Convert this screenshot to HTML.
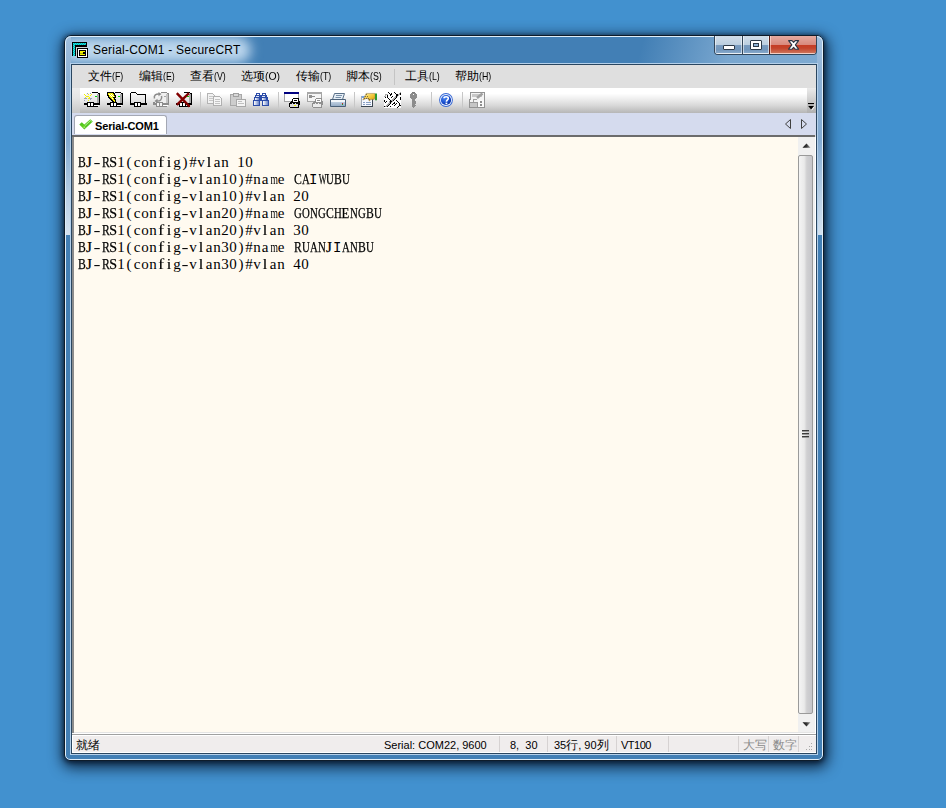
<!DOCTYPE html>
<html><head><meta charset="utf-8">
<style>
*{box-sizing:border-box}
html,body{margin:0;padding:0}
body{width:946px;height:808px;overflow:hidden;position:relative;background:#4291cf;font-family:"Liberation Sans",sans-serif}
.a{position:absolute}
svg{position:absolute;overflow:visible}
#shadow{left:64px;top:35px;width:760px;height:726px;border-radius:7px;box-shadow:1px 4px 14px 3px rgba(0,12,30,.75),0 1px 4px 1px rgba(0,10,25,.55)}
#frame{left:64px;top:35px;width:760px;height:726px;border-radius:7px 7px 6px 6px;background:#427fb5;border:1px solid #0e1c2a;overflow:hidden}
#frame .hl{position:absolute;left:0;top:0;right:0;bottom:0;border:1px solid rgba(232,243,252,.95);border-radius:6px 6px 5px 5px}
#glow{left:-6px;top:1px;width:192px;height:26px;background:rgba(200,222,242,.92);border-radius:14px;filter:blur(6px)}
#streakR{left:496px;top:0px;width:270px;height:28px;background:linear-gradient(105deg,rgba(175,205,232,0) 30%,rgba(175,205,232,.5) 62%,rgba(175,205,232,.55) 100%)}
.sideTop{top:0px;width:5px;height:104px;background:linear-gradient(#a2c0de,#8cb0d4 40%,#82aad2)}
.side{top:104px;width:5px;height:95px;background:linear-gradient(#82aad2,#b8cfe5 60%,#d4e2ef)}
#clientHl{left:70px;top:63px;width:748px;height:692px;border:1px solid #b4d0ea}
#client{left:71px;top:64px;width:746px;height:690px;border:1px solid #2a4660;background:#e0e0e0}
.title{left:93px;top:43px;font-size:12px;color:#000;white-space:pre;letter-spacing:.22px}
.menu{top:69px;font-size:12px;white-space:pre;color:#000;line-height:14px}
.menu span{font-size:11px;display:inline-block;transform-origin:0 50%}
#menubar{left:72px;top:65px;width:744px;height:23px;background:#dfdfdf}
#toolbar{left:72px;top:88px;width:744px;height:25px;background:linear-gradient(#fff 0,#fff 22%,#f0f0f0 42%,#d8d8d8 70%,#b6b6b6 100%)}
#tbgrip{left:72px;top:88px;width:8px;height:25px;background:linear-gradient(#ececec,#e4e4e4 40%,#c8c8c8)}
#chev{left:807px;top:88px;width:9px;height:25px;background:linear-gradient(#eaeaea,#b0b0b0)}
.tsep{top:92px;width:1px;height:18px;background:linear-gradient(#c6c6c6 0,#c8c8c8 80%,rgba(200,200,200,0))}
#tabbar{left:72px;top:113px;width:744px;height:22px;background:#d5dbee}
#tab{left:74px;top:115px;width:93px;height:19px;background:#fff;border:1px solid #a4a8b4;border-bottom:none;border-radius:3px 3px 0 0}
.tabt{left:95px;top:120px;font-size:11px;font-weight:bold;white-space:pre;color:#000;letter-spacing:-.15px}
#tabline{left:72px;top:135px;width:743px;height:2px;background:#6c6c6c}
#term{left:72px;top:137px;width:726px;height:596px;background:#fffaf0;border-left:2px solid #8c8c8c}
#scroll{left:798px;top:137px;width:18px;height:596px;background:#f0f0f0;border-right:1px solid #fff}
#thumb{left:798px;top:155px;width:15px;height:559px;border:1px solid #9a9a9a;border-radius:2px;background:linear-gradient(90deg,#f4f4f4 0,#eaeaea 40%,#d0d0d2 60%,#c6c6ca 100%)}
#tt{left:77px;top:154px;font-family:"Liberation Serif",serif;font-size:15px;line-height:17px;color:#000}
#tt i.u{-webkit-text-stroke:.25px #000}
#tt i.m{font-family:"Liberation Mono",monospace;font-size:14px;margin-top:1px}
#tt i{position:absolute;display:block;width:8px;height:17px;text-align:center;font-style:normal;white-space:pre}
#status{left:72px;top:733px;width:744px;height:20px;background:#f0eded;border-top:1px solid #fff;border-left:1px solid #fff;border-bottom:1px solid #fff}
#statusline{left:72px;top:734px;width:744px;height:1px;background:#a0a0a0}
.st{top:739px;font-size:11px;white-space:pre;color:#000;line-height:13px}
.sep{top:736px;width:1px;height:16px;background:#d6d2d2}
.cb{top:36px;height:19px;border:1px solid #2c3f52;}
</style></head><body>
<div class="a" id="shadow"></div>
<div class="a" id="frame">
<div class="a" id="glow"></div>
<div class="a" id="streakR"></div>
<div class="a sideTop" style="left:1px"></div>
<div class="a sideTop" style="left:752px"></div>
<div class="a side" style="left:1px"></div>
<div class="a side" style="left:752px"></div>
<div class="hl"></div></div>
<div class="a" id="clientHl"></div>
<div class="a" id="client"></div>
<!-- title icon -->
<svg style="left:72px;top:42px" width="16" height="16" viewBox="0 0 16 16" shape-rendering="crispEdges">
<rect x="0" y="0" width="15" height="14" fill="#000"/>
<rect x="1" y="1" width="13" height="2" fill="#20a0a0"/><rect x="1" y="1" width="2" height="13" fill="#20a0a0"/>
<g fill="#00f0f0"><rect x="1" y="1" width="1" height="1"/><rect x="3" y="1" width="1" height="1"/><rect x="5" y="1" width="1" height="1"/><rect x="7" y="1" width="1" height="1"/><rect x="9" y="1" width="1" height="1"/><rect x="11" y="1" width="1" height="1"/><rect x="13" y="1" width="1" height="1"/><rect x="2" y="2" width="1" height="1"/><rect x="4" y="2" width="1" height="1"/><rect x="6" y="2" width="1" height="1"/><rect x="8" y="2" width="1" height="1"/><rect x="10" y="2" width="1" height="1"/><rect x="12" y="2" width="1" height="1"/><rect x="1" y="3" width="1" height="1"/><rect x="2" y="4" width="1" height="1"/><rect x="1" y="5" width="1" height="1"/><rect x="2" y="6" width="1" height="1"/><rect x="1" y="7" width="1" height="1"/><rect x="2" y="8" width="1" height="1"/><rect x="1" y="9" width="1" height="1"/><rect x="2" y="10" width="1" height="1"/><rect x="1" y="11" width="1" height="1"/><rect x="2" y="12" width="1" height="1"/><rect x="1" y="13" width="1" height="1"/></g>
<rect x="4" y="5" width="11" height="1" fill="#d0d0d0"/><rect x="4" y="5" width="1" height="9" fill="#d0d0d0"/>
<rect x="5" y="6" width="11" height="10" fill="#000"/>
<rect x="6" y="7" width="9" height="8" fill="#fff"/>
<rect x="7" y="8" width="7" height="6" fill="#000"/>
<rect x="8" y="9" width="5" height="4" fill="#f0f000"/>
<rect x="11" y="10" width="2" height="2" fill="#000"/>
<rect x="8" y="11" width="3" height="1" fill="#b0b000"/>
</svg>
<div class="a title">Serial-COM1 - SecureCRT</div>
<!-- caption buttons -->
<div class="a" style="left:714px;top:36px;width:103px;height:19px;border:1px solid #32465a;border-top:none;border-radius:0 0 4px 4px;overflow:hidden">
 <div class="a" style="left:0;top:0;width:27px;height:18px;background:linear-gradient(#d0dde9 0,#bccfe0 50%,#7a9cbf 52%,#7196bc 80%,#86a8ca 100%);border:1px solid rgba(255,255,255,.55);border-top:none"></div>
 <div class="a" style="left:27px;top:0;width:1px;height:18px;background:#32465a"></div>
 <div class="a" style="left:28px;top:0;width:26px;height:18px;background:linear-gradient(#d0dde9 0,#bccfe0 50%,#7a9cbf 52%,#7196bc 80%,#86a8ca 100%);border:1px solid rgba(255,255,255,.55);border-top:none"></div>
 <div class="a" style="left:54px;top:0;width:1px;height:18px;background:#5a2018"></div>
 <div class="a" style="left:55px;top:0;width:47px;height:18px;background:linear-gradient(#e4aaa0 0,#d98a7e 50%,#c53b23 52%,#c4442c 72%,#cc7258 100%);border:1px solid rgba(255,230,220,.6);border-top:none"></div>
</div>
<div class="a" style="left:723px;top:45px;width:12px;height:5px;background:#fff;border:1px solid #2d3a48;border-radius:1px"></div>
<div class="a" style="left:750px;top:40px;width:12px;height:10px;background:#fff;border:1px solid #2d3a48;border-radius:1px"></div>
<div class="a" style="left:753px;top:43px;width:6px;height:4px;background:#8fb2d4;border:1px solid #2d3a48"></div>
<svg style="left:788px;top:40px" width="12" height="10" viewBox="0 0 12 10">
<path d="M0.6 0.6 H4 L5.6 2.4 L7.2 0.6 H10.6 L7.4 4.9 L10.6 9.2 H7.2 L5.6 7.3 L4 9.2 H0.6 L3.8 4.9 Z" fill="#fff" stroke="#2a3645" stroke-width="1.1" stroke-linejoin="round"/>
</svg>
<!-- menu -->
<div class="a" id="menubar"></div>
<div class="a menu" style="left:88px">文件<span style="transform:scaleX(.8)">(F)</span></div>
<div class="a menu" style="left:139px">编辑<span style="transform:scaleX(.8)">(E)</span></div>
<div class="a menu" style="left:190px">查看<span style="transform:scaleX(.8)">(V)</span></div>
<div class="a menu" style="left:241px">选项<span style="transform:scaleX(.95)">(O)</span></div>
<div class="a menu" style="left:296px">传输<span style="transform:scaleX(.8)">(T)</span></div>
<div class="a menu" style="left:346px">脚本<span style="transform:scaleX(.8)">(S)</span></div>
<div class="a" style="left:394px;top:69px;width:1px;height:16px;background:#c4c4c4"></div>
<div class="a menu" style="left:405px">工具<span style="transform:scaleX(.8)">(L)</span></div>
<div class="a menu" style="left:455px">帮助<span style="transform:scaleX(.8)">(H)</span></div>
<!-- toolbar -->
<div class="a" id="toolbar"></div>
<div class="a" id="tbgrip"></div>
<div class="a" id="chev"></div>
<svg style="left:808px;top:102px" width="7" height="9" viewBox="0 0 7 9">
<rect x="0" y="1" width="6" height="1.5" fill="#000"/>
<rect x="0" y="2.5" width="6.5" height="1.2" fill="#fff"/>
<path d="M0 3.8 H6.2 L3.1 7.6 Z" fill="#000"/>
<path d="M6.4 4.6 L3.6 8.2" stroke="#fff" stroke-width="1"/>
</svg>
<!--ICONS-->
<!-- icon1 connect -->
<svg style="left:84px;top:92px" width="16" height="16" viewBox="0 0 16 16" shape-rendering="crispEdges">
<defs><linearGradient id="bx" x1="0" y1="0" x2="0" y2="1"><stop offset="0" stop-color="#fafafa"/><stop offset="1" stop-color="#dedede"/></linearGradient></defs>
<rect x="2" y="1" width="13" height="10" fill="url(#bx)"/>
<rect x="13" y="2" width="2" height="9" fill="#a9a9a9"/>
<rect x="8" y="0" width="6" height="1" fill="#000"/><rect x="14" y="1" width="1" height="1" fill="#000"/>
<rect x="15" y="1" width="1" height="11" fill="#000"/>
<rect x="11" y="4" width="2" height="1" fill="#00d800"/>
<g fill="#f4f000"><rect x="0" y="2" width="1" height="1"/><rect x="1" y="3" width="1" height="1"/><rect x="2" y="4" width="2" height="1"/><rect x="4" y="6" width="2" height="1"/><rect x="4" y="2" width="1" height="1"/><rect x="4" y="4" width="1" height="1"/><rect x="7" y="2" width="1" height="1"/><rect x="6" y="3" width="1" height="1"/><rect x="5" y="5" width="1" height="1"/><rect x="1" y="5" width="1" height="1"/><rect x="4" y="8" width="1" height="1"/></g>
<g fill="#9aa0b8"><rect x="3" y="1" width="1" height="1"/><rect x="6" y="1" width="1" height="1"/><rect x="0" y="6" width="3" height="1"/><rect x="6" y="6" width="2" height="1"/><rect x="0" y="8" width="1" height="1"/><rect x="6" y="7" width="1" height="1"/></g>
<rect x="0" y="11" width="16" height="2" fill="#000"/>
<rect x="10" y="13" width="5" height="1" fill="#fff"/>
<rect x="10" y="14" width="4" height="1" fill="#000"/>
<rect x="3" y="10" width="7" height="5" fill="#000"/>
<rect x="4" y="11" width="2" height="3" fill="#fff"/><rect x="7" y="11" width="2" height="3" fill="#fff"/>
</svg>
<!-- icon2 lightning -->
<svg style="left:107px;top:92px" width="16" height="16" viewBox="0 0 16 16" shape-rendering="crispEdges">
<rect x="2" y="1" width="13" height="10" fill="url(#bx)"/>
<rect x="13" y="2" width="2" height="9" fill="#a9a9a9"/>
<rect x="8" y="0" width="6" height="1" fill="#000"/><rect x="14" y="1" width="1" height="1" fill="#000"/>
<rect x="15" y="1" width="1" height="11" fill="#000"/>
<rect x="11" y="4" width="2" height="1" fill="#00d800"/>
<g fill="#000"><rect x="0" y="0" width="1" height="1"/><rect x="0" y="1" width="1" height="1"/><rect x="0" y="2" width="1" height="1"/><rect x="0" y="3" width="1" height="1"/><rect x="1" y="0" width="1" height="1"/><rect x="1" y="3" width="1" height="1"/><rect x="1" y="4" width="1" height="1"/><rect x="1" y="5" width="1" height="1"/><rect x="2" y="0" width="1" height="1"/><rect x="2" y="5" width="1" height="1"/><rect x="2" y="6" width="1" height="1"/><rect x="3" y="0" width="1" height="1"/><rect x="3" y="6" width="1" height="1"/><rect x="3" y="7" width="1" height="1"/><rect x="4" y="0" width="1" height="1"/><rect x="4" y="7" width="1" height="1"/><rect x="4" y="8" width="1" height="1"/><rect x="5" y="0" width="1" height="1"/><rect x="5" y="8" width="1" height="1"/><rect x="5" y="9" width="1" height="1"/><rect x="6" y="0" width="1" height="1"/><rect x="6" y="1" width="1" height="1"/><rect x="6" y="5" width="1" height="1"/><rect x="6" y="9" width="1" height="1"/><rect x="6" y="10" width="1" height="1"/><rect x="7" y="1" width="1" height="1"/><rect x="7" y="2" width="1" height="1"/><rect x="7" y="3" width="1" height="1"/><rect x="7" y="5" width="1" height="1"/><rect x="7" y="6" width="1" height="1"/><rect x="7" y="7" width="1" height="1"/><rect x="7" y="10" width="1" height="1"/><rect x="8" y="3" width="1" height="1"/><rect x="8" y="4" width="1" height="1"/><rect x="8" y="5" width="1" height="1"/><rect x="8" y="7" width="1" height="1"/><rect x="8" y="8" width="1" height="1"/><rect x="8" y="9" width="1" height="1"/><rect x="8" y="10" width="1" height="1"/></g><g fill="#f4ec00"><rect x="1" y="1" width="1" height="1"/><rect x="1" y="2" width="1" height="1"/><rect x="2" y="1" width="1" height="1"/><rect x="2" y="3" width="1" height="1"/><rect x="2" y="4" width="1" height="1"/><rect x="3" y="1" width="1" height="1"/><rect x="3" y="2" width="1" height="1"/><rect x="3" y="4" width="1" height="1"/><rect x="3" y="5" width="1" height="1"/><rect x="4" y="1" width="1" height="1"/><rect x="4" y="3" width="1" height="1"/><rect x="4" y="5" width="1" height="1"/><rect x="4" y="6" width="1" height="1"/><rect x="5" y="1" width="1" height="1"/><rect x="5" y="2" width="1" height="1"/><rect x="5" y="4" width="1" height="1"/><rect x="5" y="5" width="1" height="1"/><rect x="5" y="7" width="1" height="1"/><rect x="6" y="2" width="1" height="1"/><rect x="6" y="3" width="1" height="1"/><rect x="6" y="6" width="1" height="1"/><rect x="6" y="7" width="1" height="1"/><rect x="6" y="8" width="1" height="1"/><rect x="7" y="4" width="1" height="1"/><rect x="7" y="8" width="1" height="1"/><rect x="7" y="9" width="1" height="1"/></g><g fill="#fff"><rect x="2" y="2" width="1" height="1"/><rect x="3" y="3" width="1" height="1"/><rect x="4" y="2" width="1" height="1"/><rect x="4" y="4" width="1" height="1"/><rect x="5" y="3" width="1" height="1"/><rect x="5" y="6" width="1" height="1"/><rect x="6" y="4" width="1" height="1"/></g>
<rect x="0" y="11" width="16" height="2" fill="#000"/>
<rect x="10" y="13" width="5" height="1" fill="#fff"/>
<rect x="10" y="14" width="4" height="1" fill="#000"/>
<rect x="3" y="10" width="7" height="5" fill="#000"/>
<rect x="4" y="11" width="2" height="3" fill="#fff"/><rect x="7" y="11" width="2" height="3" fill="#fff"/>
</svg>
<!-- icon3 folder -->
<svg style="left:130px;top:92px" width="17" height="16" viewBox="0 0 17 16" shape-rendering="crispEdges">
<path d="M0 1 H1 V0 H6 V1 H7 V2 H16 V12 H0 Z" fill="#000"/>
<path d="M1 1 H6 V2 H7 V3 H15 V11 H1 Z" fill="url(#bx)"/>
<rect x="1" y="11" width="15" height="1" fill="#000"/>
<rect x="0" y="11" width="17" height="2" fill="#000"/>
<rect x="4" y="10" width="7" height="5" fill="#000"/>
<rect x="5" y="11" width="2" height="3" fill="#fff"/><rect x="8" y="11" width="2" height="3" fill="#fff"/>
</svg>
<!-- icon4 reconnect (disabled) -->
<svg style="left:153px;top:92px" width="16" height="16" viewBox="0 0 16 16" shape-rendering="crispEdges">
<rect x="5" y="1" width="10" height="10" fill="#efefef"/>
<rect x="13" y="2" width="2" height="9" fill="#c4c4c4"/>
<rect x="8" y="0" width="6" height="1" fill="#8a8a8a"/><rect x="14" y="1" width="1" height="1" fill="#8a8a8a"/>
<rect x="15" y="1" width="1" height="11" fill="#8a8a8a"/>
<rect x="11" y="4" width="2" height="1" fill="#a8a8a8"/>
<path d="M1.5 6.5 C0.5 3.5 3 1.5 6.5 2" fill="none" stroke="#8c8c8c" stroke-width="1.5" shape-rendering="auto"/>
<path d="M5.5 0 L8.5 2 L5.5 4.2 Z" fill="#8c8c8c" shape-rendering="auto"/>
<path d="M8.5 4 C9.5 7.5 7 9.5 3.5 9" fill="none" stroke="#8c8c8c" stroke-width="1.5" shape-rendering="auto"/>
<path d="M4.5 6.8 L1.5 9 L4.5 11.2 Z" fill="#8c8c8c" shape-rendering="auto"/>
<rect x="0" y="11" width="16" height="2" fill="#8c8c8c"/>
<rect x="0" y="10" width="2" height="1" fill="#8c8c8c"/>
<rect x="10" y="13" width="5" height="1" fill="#fff"/>
<rect x="10" y="14" width="4" height="1" fill="#8c8c8c"/>
<rect x="3" y="10" width="7" height="5" fill="#8c8c8c"/>
<rect x="4" y="11" width="2" height="3" fill="#f4f4f4"/><rect x="7" y="11" width="2" height="3" fill="#f4f4f4"/>
</svg>
<!-- icon5 disconnect -->
<svg style="left:176px;top:92px" width="16" height="16" viewBox="0 0 16 16" shape-rendering="crispEdges">
<rect x="2" y="1" width="13" height="10" fill="url(#bx)"/>
<rect x="13" y="2" width="2" height="9" fill="#a9a9a9"/>
<rect x="8" y="0" width="6" height="1" fill="#000"/><rect x="14" y="1" width="1" height="1" fill="#000"/>
<rect x="15" y="1" width="1" height="11" fill="#000"/>
<rect x="11" y="4" width="2" height="1" fill="#00d800"/>
<rect x="0" y="11" width="16" height="2" fill="#000"/>
<rect x="10" y="13" width="5" height="1" fill="#fff"/>
<rect x="10" y="14" width="4" height="1" fill="#000"/>
<rect x="3" y="10" width="7" height="5" fill="#000"/>
<rect x="4" y="11" width="2" height="3" fill="#fff"/><rect x="7" y="11" width="2" height="3" fill="#fff"/>
<path d="M0.8 1.2 L13.6 14.6 M13 1.2 L0.8 12.8" stroke="#820000" stroke-width="2.4" shape-rendering="auto"/>
</svg>
<!-- copy (disabled) -->
<svg style="left:207px;top:93px" width="16" height="14" viewBox="0 0 16 14" shape-rendering="crispEdges">
<path d="M0 0 H5 L7 2 V10 H0 Z" fill="#f2f2f2" stroke="#b4b4b4" stroke-width="1" transform="translate(.5 .5)"/>
<g fill="#c8c8c8"><rect x="2" y="3" width="4" height="1"/><rect x="2" y="5" width="4" height="1"/><rect x="2" y="7" width="4" height="1"/></g>
<path d="M0 0 H6 L8 2 V9 H0 Z" fill="#f6f6f6" stroke="#b0b0b0" stroke-width="1" transform="translate(6.5 3.5)"/>
<g fill="#c4c4c4"><rect x="8" y="6" width="5" height="1"/><rect x="8" y="8" width="5" height="1"/><rect x="8" y="10" width="5" height="1"/></g>
</svg>
<!-- paste (disabled) -->
<svg style="left:230px;top:93px" width="17" height="14" viewBox="0 0 17 14" shape-rendering="crispEdges">
<rect x="0.5" y="1.5" width="11" height="11" fill="#cdcdcd" stroke="#a8a8a8"/>
<rect x="3.5" y="0.5" width="5" height="3" fill="#d8d8d8" stroke="#a0a0a0"/>
<rect x="6.5" y="6.5" width="9" height="7" fill="#f4f4f4" stroke="#a8a8a8"/>
<g fill="#c0c0c0"><rect x="8" y="8" width="4" height="1"/><rect x="8" y="10" width="6" height="1"/></g>
</svg>
<!-- find binoculars -->
<svg style="left:253px;top:93px" width="16" height="14" viewBox="0 0 16 14" shape-rendering="crispEdges">
<defs><linearGradient id="bn" x1="0" y1="0" x2="1" y2="0"><stop offset="0" stop-color="#fff"/><stop offset="1" stop-color="#6a84c8"/></linearGradient></defs>
<g fill="#2c4ca8">
<rect x="3" y="0" width="4" height="3"/><rect x="2" y="2" width="6" height="3"/><rect x="1" y="4" width="7" height="4"/><rect x="0" y="7" width="7" height="6"/>
<rect x="9" y="0" width="4" height="3"/><rect x="8" y="2" width="6" height="3"/><rect x="8" y="4" width="7" height="4"/><rect x="9" y="7" width="7" height="6"/>
<rect x="6" y="5" width="4" height="3"/>
</g>
<rect x="4" y="1" width="2" height="1" fill="#fff"/><rect x="10" y="1" width="2" height="1" fill="#fff"/>
<rect x="3" y="3" width="3" height="1" fill="#dce4f6"/><rect x="9" y="3" width="3" height="1" fill="#dce4f6"/>
<rect x="2" y="5" width="4" height="2" fill="url(#bn)"/><rect x="9" y="5" width="4" height="2" fill="url(#bn)"/>
<rect x="1" y="8" width="5" height="4" fill="url(#bn)"/><rect x="10" y="8" width="5" height="4" fill="url(#bn)"/>
</svg>
<!-- print screen -->
<svg style="left:284px;top:92px" width="17" height="17" viewBox="0 0 17 17" shape-rendering="crispEdges">
<rect x="0.5" y="0.5" width="14" height="9" fill="#fff" stroke="#a4a4a4"/>
<rect x="0" y="0" width="15" height="2" fill="#000080"/>
<rect x="9" y="6" width="6" height="1" fill="#000"/><rect x="8" y="7" width="1" height="1" fill="#000"/><rect x="9" y="7" width="5" height="1" fill="#fff"/><rect x="14" y="7" width="1" height="1" fill="#000"/><rect x="8" y="8" width="1" height="1" fill="#000"/><rect x="9" y="8" width="1" height="1" fill="#fff"/><rect x="10" y="8" width="3" height="1" fill="#000"/><rect x="13" y="8" width="1" height="1" fill="#fff"/><rect x="14" y="8" width="1" height="1" fill="#000"/><rect x="7" y="9" width="2" height="1" fill="#000"/><rect x="9" y="9" width="5" height="1" fill="#fff"/><rect x="14" y="9" width="2" height="1" fill="#000"/><rect x="6" y="10" width="10" height="1" fill="#000"/><rect x="5" y="11" width="11" height="1" fill="#000"/><rect x="8" y="11" width="1" height="1" fill="#dcdcdc"/><rect x="11" y="11" width="1" height="1" fill="#dcdcdc"/><rect x="5" y="12" width="1" height="1" fill="#000"/><rect x="6" y="12" width="8" height="1" fill="#dcdcdc"/><rect x="14" y="12" width="2" height="1" fill="#000"/><rect x="5" y="13" width="1" height="1" fill="#000"/><rect x="6" y="13" width="4" height="1" fill="#dcdcdc"/><rect x="10" y="13" width="2" height="1" fill="#f0f000"/><rect x="12" y="13" width="2" height="1" fill="#dcdcdc"/><rect x="14" y="13" width="1" height="1" fill="#000"/><rect x="5" y="14" width="1" height="1" fill="#000"/><rect x="6" y="14" width="8" height="1" fill="#dcdcdc"/><rect x="14" y="14" width="1" height="1" fill="#000"/><rect x="6" y="15" width="9" height="1" fill="#000"/>
</svg>
<!-- print selection (disabled) -->
<svg style="left:307px;top:92px" width="17" height="17" viewBox="0 0 17 17" shape-rendering="crispEdges">
<rect x="0.5" y="0.5" width="14" height="9" fill="#f6f6f6" stroke="#a4a4a4"/>
<rect x="0" y="0" width="15" height="2" fill="#a8a8a8"/>
<rect x="2" y="3" width="3" height="3" fill="#909090"/><rect x="5" y="4" width="3" height="1" fill="#909090"/>
<rect x="9" y="6" width="6" height="1" fill="#909090"/><rect x="8" y="7" width="1" height="1" fill="#909090"/><rect x="9" y="7" width="5" height="1" fill="#fff"/><rect x="14" y="7" width="1" height="1" fill="#909090"/><rect x="8" y="8" width="1" height="1" fill="#909090"/><rect x="9" y="8" width="1" height="1" fill="#fff"/><rect x="10" y="8" width="3" height="1" fill="#909090"/><rect x="13" y="8" width="1" height="1" fill="#fff"/><rect x="14" y="8" width="1" height="1" fill="#909090"/><rect x="7" y="9" width="2" height="1" fill="#909090"/><rect x="9" y="9" width="5" height="1" fill="#fff"/><rect x="14" y="9" width="2" height="1" fill="#909090"/><rect x="6" y="10" width="10" height="1" fill="#909090"/><rect x="5" y="11" width="11" height="1" fill="#909090"/><rect x="8" y="11" width="1" height="1" fill="#ececec"/><rect x="11" y="11" width="1" height="1" fill="#ececec"/><rect x="5" y="12" width="1" height="1" fill="#909090"/><rect x="6" y="12" width="8" height="1" fill="#ececec"/><rect x="14" y="12" width="2" height="1" fill="#909090"/><rect x="5" y="13" width="1" height="1" fill="#909090"/><rect x="6" y="13" width="4" height="1" fill="#ececec"/><rect x="10" y="13" width="2" height="1" fill="#ececec"/><rect x="12" y="13" width="2" height="1" fill="#ececec"/><rect x="14" y="13" width="1" height="1" fill="#909090"/><rect x="5" y="14" width="1" height="1" fill="#909090"/><rect x="6" y="14" width="8" height="1" fill="#ececec"/><rect x="14" y="14" width="1" height="1" fill="#909090"/><rect x="6" y="15" width="9" height="1" fill="#909090"/>
</svg>
<!-- printer -->
<svg style="left:330px;top:93px" width="16" height="14" viewBox="0 0 16 14">
<defs><linearGradient id="pr" x1="0" y1="0" x2="0" y2="1"><stop offset="0" stop-color="#d8e4f0"/><stop offset="1" stop-color="#90a8c4"/></linearGradient></defs>
<path d="M4.5 0.5 H14.5 L12.5 6.5 H2.5 Z" fill="#e6eef6" stroke="#5a7088" stroke-width="1"/>
<path d="M6 2.5 H12 M5.5 4.5 H11" stroke="#7890a8" stroke-width="1"/>
<path d="M0.5 6.5 H15.5 V13.5 H0.5 Z" fill="url(#pr)" stroke="#4a6078" stroke-width="1"/>
<rect x="1" y="7" width="14" height="2" fill="#f4f8fc"/>
<rect x="12" y="10" width="1" height="2" fill="#d02020"/><rect x="12" y="11" width="1" height="1" fill="#20a020"/>
</svg>
<!-- session options -->
<svg style="left:361px;top:93px" width="17" height="14" viewBox="0 0 17 14">
<defs><linearGradient id="yh" x1="0" y1="0" x2="1" y2="1"><stop offset="0" stop-color="#fff4a0"/><stop offset=".6" stop-color="#f0c030"/><stop offset="1" stop-color="#c88800"/></linearGradient></defs>
<g shape-rendering="crispEdges">
<rect x="0" y="3" width="12" height="11" fill="#f6f9ff"/>
<rect x="0" y="3" width="1" height="11" fill="#a0a8b4"/>
<rect x="11" y="3" width="1" height="11" fill="#3c4650"/><rect x="0" y="13" width="12" height="1" fill="#3c4650"/>
<rect x="1" y="3" width="10" height="2" fill="#74a4e4"/>
<rect x="2" y="9" width="2" height="1" fill="#8aa0c4"/><rect x="5" y="9" width="5" height="1" fill="#8aa0c4"/>
<rect x="2" y="11" width="2" height="1" fill="#8aa0c4"/><rect x="5" y="11" width="5" height="1" fill="#8aa0c4"/>
</g>
<path d="M1.8 7 L5.2 0.4 H13.8 L14.3 3.6 L13.2 6.4 H9.4 L8.6 8.2 L6.2 5 Z" fill="url(#yh)" stroke="#8a7040" stroke-width=".5"/>
<g fill="#5a4a30" opacity=".75" shape-rendering="crispEdges"><rect x="5" y="1" width="1" height="1"/><rect x="4" y="3" width="1" height="1"/><rect x="6" y="3" width="1" height="1"/><rect x="3" y="5" width="1" height="1"/><rect x="5" y="5" width="1" height="1"/><rect x="7" y="5" width="1" height="1"/><rect x="8" y="6" width="1" height="1"/></g>
<rect x="14" y="0.5" width="2" height="6.8" fill="#2e9a2e"/>
</svg>
<!-- keymap -->
<svg style="left:384px;top:92px" width="17" height="16" viewBox="0 0 17 16" shape-rendering="crispEdges">
<rect x="0" y="0" width="17" height="16" fill="#fff"/>
<g fill="#b0b0b0"><rect x="0" y="4" width="1" height="1"/><rect x="1" y="3" width="1" height="1"/><rect x="1" y="4" width="1" height="1"/><rect x="2" y="2" width="1" height="1"/><rect x="2" y="14" width="1" height="1"/><rect x="3" y="2" width="1" height="1"/><rect x="3" y="13" width="1" height="1"/><rect x="4" y="12" width="1" height="1"/><rect x="5" y="11" width="1" height="1"/><rect x="7" y="10" width="1" height="1"/><rect x="8" y="8" width="1" height="1"/><rect x="8" y="9" width="1" height="1"/><rect x="9" y="7" width="1" height="1"/><rect x="10" y="6" width="1" height="1"/><rect x="11" y="5" width="1" height="1"/><rect x="13" y="4" width="1" height="1"/><rect x="14" y="2" width="1" height="1"/><rect x="14" y="3" width="1" height="1"/><rect x="15" y="1" width="1" height="1"/><rect x="15" y="2" width="1" height="1"/></g><g fill="#a8a8a8"><rect x="0" y="4" width="1" height="1"/><rect x="1" y="2" width="1" height="1"/><rect x="1" y="3" width="1" height="1"/><rect x="1" y="14" width="1" height="1"/><rect x="2" y="2" width="1" height="1"/><rect x="2" y="13" width="1" height="1"/><rect x="3" y="12" width="1" height="1"/><rect x="4" y="11" width="1" height="1"/><rect x="5" y="9" width="1" height="1"/><rect x="5" y="10" width="1" height="1"/><rect x="7" y="8" width="1" height="1"/><rect x="8" y="7" width="1" height="1"/><rect x="9" y="6" width="1" height="1"/><rect x="10" y="5" width="1" height="1"/><rect x="11" y="4" width="1" height="1"/><rect x="15" y="1" width="1" height="1"/><rect x="16" y="0" width="1" height="1"/></g><g fill="#000"><rect x="0" y="8" width="1" height="1"/><rect x="0" y="9" width="1" height="1"/><rect x="0" y="14" width="1" height="1"/><rect x="1" y="5" width="1" height="1"/><rect x="1" y="10" width="1" height="1"/><rect x="2" y="9" width="1" height="1"/><rect x="3" y="3" width="1" height="1"/><rect x="3" y="4" width="1" height="1"/><rect x="3" y="5" width="1" height="1"/><rect x="3" y="14" width="1" height="1"/><rect x="4" y="0" width="1" height="1"/><rect x="4" y="6" width="1" height="1"/><rect x="4" y="13" width="1" height="1"/><rect x="5" y="1" width="1" height="1"/><rect x="5" y="7" width="1" height="1"/><rect x="5" y="12" width="1" height="1"/><rect x="6" y="2" width="1" height="1"/><rect x="6" y="3" width="1" height="1"/><rect x="6" y="8" width="1" height="1"/><rect x="6" y="9" width="1" height="1"/><rect x="6" y="10" width="1" height="1"/><rect x="6" y="11" width="1" height="1"/><rect x="6" y="14" width="1" height="1"/><rect x="7" y="1" width="1" height="1"/><rect x="7" y="2" width="1" height="1"/><rect x="7" y="5" width="1" height="1"/><rect x="7" y="9" width="1" height="1"/><rect x="8" y="4" width="1" height="1"/><rect x="8" y="12" width="1" height="1"/><rect x="9" y="8" width="1" height="1"/><rect x="9" y="11" width="1" height="1"/><rect x="10" y="0" width="1" height="1"/><rect x="10" y="7" width="1" height="1"/><rect x="10" y="10" width="1" height="1"/><rect x="10" y="11" width="1" height="1"/><rect x="10" y="13" width="1" height="1"/><rect x="11" y="1" width="1" height="1"/><rect x="11" y="6" width="1" height="1"/><rect x="11" y="12" width="1" height="1"/><rect x="12" y="2" width="1" height="1"/><rect x="12" y="3" width="1" height="1"/><rect x="12" y="4" width="1" height="1"/><rect x="12" y="5" width="1" height="1"/><rect x="12" y="8" width="1" height="1"/><rect x="12" y="11" width="1" height="1"/><rect x="13" y="2" width="1" height="1"/><rect x="13" y="3" width="1" height="1"/><rect x="13" y="9" width="1" height="1"/><rect x="13" y="15" width="1" height="1"/><rect x="14" y="10" width="1" height="1"/><rect x="14" y="14" width="1" height="1"/><rect x="15" y="11" width="1" height="1"/><rect x="15" y="12" width="1" height="1"/><rect x="15" y="13" width="1" height="1"/><rect x="16" y="1" width="1" height="1"/><rect x="16" y="2" width="1" height="1"/><rect x="16" y="5" width="1" height="1"/><rect x="16" y="6" width="1" height="1"/><rect x="16" y="7" width="1" height="1"/><rect x="16" y="13" width="1" height="1"/></g>
</svg>
<!-- key -->
<svg style="left:410px;top:92px" width="8" height="16" viewBox="0 0 8 16" shape-rendering="crispEdges">
<path d="M2 0 H5 V1 H6 V2 H7 V6 H6 V7 H5 V15 H4 V16 H3 V15 H2 V7 H1 V6 H0 V2 H1 V1 H2 Z" fill="#8c8c8c"/>
<rect x="3" y="2" width="1" height="1" fill="#fff"/>
<rect x="5" y="9" width="1" height="3" fill="#8c8c8c"/><rect x="5" y="13" width="1" height="1" fill="#8c8c8c"/>
<rect x="2" y="0" width="3" height="1" fill="#7a7a7a"/>
</svg>
<!-- help -->
<svg style="left:439px;top:93px" width="14" height="14" viewBox="0 0 14 14">
<defs><radialGradient id="hg" cx=".35" cy=".3" r=".75"><stop offset="0" stop-color="#4a86f0"/><stop offset=".6" stop-color="#1a50d0"/><stop offset="1" stop-color="#0a30a0"/></radialGradient></defs>
<circle cx="7" cy="7" r="6.9" fill="#3868d4"/>
<circle cx="7" cy="7" r="6" fill="#eaf2ff"/>
<circle cx="7" cy="7" r="5.1" fill="url(#hg)"/>
<path d="M5 5.3 C5 3.3 9.3 3.2 9.3 5.4 C9.3 6.9 7.4 7 7.4 8.8" fill="none" stroke="#fff" stroke-width="1.6"/>
<rect x="6.5" y="9.6" width="1.8" height="1.6" fill="#fff"/>
</svg>
<!-- lock (disabled) -->
<svg style="left:469px;top:92px" width="16" height="16" viewBox="0 0 16 16" shape-rendering="crispEdges">
<rect x="1" y="0" width="15" height="16" fill="#f4f4f4"/>
<g fill="#939393"><rect x="1" y="0" width="15" height="1"/><rect x="15" y="0" width="1" height="16"/><rect x="0" y="15" width="16" height="1"/><rect x="1" y="0" width="1" height="7"/><rect x="0" y="7" width="1" height="9"/><rect x="0" y="7" width="2" height="1"/></g>
<rect x="3" y="2" width="10" height="3" fill="#c8c8c8"/>
<path d="M8 6 L13.5 1.5" stroke="#a0a0a0" stroke-width="2.6" shape-rendering="auto"/>
<rect x="1" y="10" width="8" height="5" fill="#c6c6c6"/>
<rect x="1" y="10" width="8" height="1" fill="#9a9a9a"/><rect x="8" y="10" width="1" height="5" fill="#9a9a9a"/>
<rect x="4" y="7" width="4" height="1" fill="#a0a0a0"/><rect x="4" y="7" width="1" height="3" fill="#a0a0a0"/>
<rect x="9" y="8" width="6" height="7" fill="#fafafa"/>
<rect x="11" y="9" width="2" height="2" fill="#8e8e8e"/><rect x="11" y="12" width="2" height="2" fill="#8e8e8e"/>
</svg>

<div class="a tsep" style="left:200px"></div>
<div class="a tsep" style="left:278px"></div>
<div class="a tsep" style="left:354px"></div>
<div class="a tsep" style="left:431px"></div>
<div class="a tsep" style="left:462px"></div>
<!-- tabs -->
<div class="a" id="tabbar"></div>
<div class="a" id="tab"></div>
<svg style="left:79px;top:119px" width="14" height="11" viewBox="0 0 14 11">
<defs><linearGradient id="gk" x1="0" y1="0" x2="1" y2="1"><stop offset="0" stop-color="#3cb81a"/><stop offset=".5" stop-color="#5ed01e"/><stop offset="1" stop-color="#2a9a2a"/></linearGradient></defs>
<path d="M0.3 5.6 L2.8 3.3 L5.3 5.6 L11.3 0.2 L13.8 2.6 L5.3 10.6 Z" fill="url(#gk)"/>
<path d="M6 6.6 L11.4 1.6 L12.6 2.7" fill="none" stroke="#c8f0c0" stroke-width="1" opacity=".8"/>
<circle cx="5.3" cy="8.3" r="1" fill="#b8f080" opacity=".7"/>
</svg>
<div class="a tabt">Serial-COM1</div>
<svg style="left:783px;top:118px" width="24" height="12" viewBox="0 0 24 12">
<path d="M7.5 1.5 L2.5 6 L7.5 10.5 Z" fill="none" stroke="#404040" stroke-width="1"/>
<path d="M18.5 1.5 L23.5 6 L18.5 10.5 Z" fill="none" stroke="#404040" stroke-width="1"/>
</svg>
<div class="a" id="tabline"></div>
<!-- terminal -->
<div class="a" id="term"></div>
<div class="a" id="scroll"></div>
<svg style="left:802px;top:143px" width="9" height="5" viewBox="0 0 9 5"><defs><linearGradient id="ag" x1="0" y1="0" x2="1" y2="0"><stop offset="0" stop-color="#111"/><stop offset=".5" stop-color="#333"/><stop offset="1" stop-color="#9a9a9a"/></linearGradient></defs><path d="M0.5 4.8 L4.5 0.6 L8.5 4.8 Z" fill="url(#ag)"/></svg>
<div class="a" id="thumb"></div>
<svg style="left:802px;top:430px" width="8" height="8" viewBox="0 0 8 8" shape-rendering="crispEdges">
<g fill="#3c3c3c"><rect x="0" y="0" width="7" height="1"/><rect x="0" y="3" width="7" height="1"/><rect x="0" y="6" width="7" height="1"/></g><g fill="#9a9a9a"><rect x="0" y="1" width="7" height="1"/><rect x="0" y="4" width="7" height="1"/><rect x="0" y="7" width="7" height="1"/></g>
</svg>
<svg style="left:802px;top:722px" width="9" height="5" viewBox="0 0 9 5"><path d="M0.5 0.2 L4.5 4.4 L8.5 0.2 Z" fill="url(#ag)"/></svg>
<div class="a" id="tt">
<i class="u" style="left:0px;top:0px;transform:scaleX(0.779)">B</i><i class="u" style="left:8px;top:0px">J</i><i style="left:16px;top:0px;transform:scaleX(1.400)">-</i><i class="u" style="left:24px;top:0px;transform:scaleX(0.779)">R</i><i class="u" style="left:32px;top:0px;transform:scaleX(0.935)">S</i><i style="left:40px;top:0px">1</i><i style="left:48px;top:0px">(</i><i style="left:56px;top:0px">c</i><i style="left:64px;top:0px">o</i><i style="left:72px;top:0px">n</i><i style="left:80px;top:0px;transform:scaleX(1.250)">f</i><i style="left:88px;top:0px;transform:scaleX(1.200)">i</i><i style="left:96px;top:0px">g</i><i style="left:104px;top:0px">)</i><i style="left:112px;top:0px">#</i><i style="left:120px;top:0px">v</i><i style="left:128px;top:0px;transform:scaleX(1.200)">l</i><i style="left:136px;top:0px">a</i><i style="left:144px;top:0px">n</i><i style="left:160px;top:0px">1</i><i style="left:168px;top:0px">0</i>
<i class="u" style="left:0px;top:17px;transform:scaleX(0.779)">B</i><i class="u" style="left:8px;top:17px">J</i><i style="left:16px;top:17px;transform:scaleX(1.400)">-</i><i class="u" style="left:24px;top:17px;transform:scaleX(0.779)">R</i><i class="u" style="left:32px;top:17px;transform:scaleX(0.935)">S</i><i style="left:40px;top:17px">1</i><i style="left:48px;top:17px">(</i><i style="left:56px;top:17px">c</i><i style="left:64px;top:17px">o</i><i style="left:72px;top:17px">n</i><i style="left:80px;top:17px;transform:scaleX(1.250)">f</i><i style="left:88px;top:17px;transform:scaleX(1.200)">i</i><i style="left:96px;top:17px">g</i><i style="left:104px;top:17px;transform:scaleX(1.400)">-</i><i style="left:112px;top:17px">v</i><i style="left:120px;top:17px;transform:scaleX(1.200)">l</i><i style="left:128px;top:17px">a</i><i style="left:136px;top:17px">n</i><i style="left:144px;top:17px">1</i><i style="left:152px;top:17px">0</i><i style="left:160px;top:17px">)</i><i style="left:168px;top:17px">#</i><i style="left:176px;top:17px">n</i><i style="left:184px;top:17px">a</i><i style="left:192px;top:17px;transform:scaleX(0.643)">m</i><i style="left:200px;top:17px">e</i><i class="u" style="left:216px;top:17px;transform:scaleX(0.779)">C</i><i class="u" style="left:224px;top:17px;transform:scaleX(0.719)">A</i><i class="m" style="left:232px;top:17px">I</i><i class="u" style="left:240px;top:17px;transform:scaleX(0.550)">W</i><i class="u" style="left:248px;top:17px;transform:scaleX(0.719)">U</i><i class="u" style="left:256px;top:17px;transform:scaleX(0.779)">B</i><i class="u" style="left:264px;top:17px;transform:scaleX(0.719)">U</i>
<i class="u" style="left:0px;top:34px;transform:scaleX(0.779)">B</i><i class="u" style="left:8px;top:34px">J</i><i style="left:16px;top:34px;transform:scaleX(1.400)">-</i><i class="u" style="left:24px;top:34px;transform:scaleX(0.779)">R</i><i class="u" style="left:32px;top:34px;transform:scaleX(0.935)">S</i><i style="left:40px;top:34px">1</i><i style="left:48px;top:34px">(</i><i style="left:56px;top:34px">c</i><i style="left:64px;top:34px">o</i><i style="left:72px;top:34px">n</i><i style="left:80px;top:34px;transform:scaleX(1.250)">f</i><i style="left:88px;top:34px;transform:scaleX(1.200)">i</i><i style="left:96px;top:34px">g</i><i style="left:104px;top:34px;transform:scaleX(1.400)">-</i><i style="left:112px;top:34px">v</i><i style="left:120px;top:34px;transform:scaleX(1.200)">l</i><i style="left:128px;top:34px">a</i><i style="left:136px;top:34px">n</i><i style="left:144px;top:34px">1</i><i style="left:152px;top:34px">0</i><i style="left:160px;top:34px">)</i><i style="left:168px;top:34px">#</i><i style="left:176px;top:34px">v</i><i style="left:184px;top:34px;transform:scaleX(1.200)">l</i><i style="left:192px;top:34px">a</i><i style="left:200px;top:34px">n</i><i style="left:216px;top:34px">2</i><i style="left:224px;top:34px">0</i>
<i class="u" style="left:0px;top:51px;transform:scaleX(0.779)">B</i><i class="u" style="left:8px;top:51px">J</i><i style="left:16px;top:51px;transform:scaleX(1.400)">-</i><i class="u" style="left:24px;top:51px;transform:scaleX(0.779)">R</i><i class="u" style="left:32px;top:51px;transform:scaleX(0.935)">S</i><i style="left:40px;top:51px">1</i><i style="left:48px;top:51px">(</i><i style="left:56px;top:51px">c</i><i style="left:64px;top:51px">o</i><i style="left:72px;top:51px">n</i><i style="left:80px;top:51px;transform:scaleX(1.250)">f</i><i style="left:88px;top:51px;transform:scaleX(1.200)">i</i><i style="left:96px;top:51px">g</i><i style="left:104px;top:51px;transform:scaleX(1.400)">-</i><i style="left:112px;top:51px">v</i><i style="left:120px;top:51px;transform:scaleX(1.200)">l</i><i style="left:128px;top:51px">a</i><i style="left:136px;top:51px">n</i><i style="left:144px;top:51px">2</i><i style="left:152px;top:51px">0</i><i style="left:160px;top:51px">)</i><i style="left:168px;top:51px">#</i><i style="left:176px;top:51px">n</i><i style="left:184px;top:51px">a</i><i style="left:192px;top:51px;transform:scaleX(0.643)">m</i><i style="left:200px;top:51px">e</i><i class="u" style="left:216px;top:51px;transform:scaleX(0.719)">G</i><i class="u" style="left:224px;top:51px;transform:scaleX(0.719)">O</i><i class="u" style="left:232px;top:51px;transform:scaleX(0.719)">N</i><i class="u" style="left:240px;top:51px;transform:scaleX(0.719)">G</i><i class="u" style="left:248px;top:51px;transform:scaleX(0.779)">C</i><i class="u" style="left:256px;top:51px;transform:scaleX(0.719)">H</i><i class="u" style="left:264px;top:51px;transform:scaleX(0.850)">E</i><i class="u" style="left:272px;top:51px;transform:scaleX(0.719)">N</i><i class="u" style="left:280px;top:51px;transform:scaleX(0.719)">G</i><i class="u" style="left:288px;top:51px;transform:scaleX(0.779)">B</i><i class="u" style="left:296px;top:51px;transform:scaleX(0.719)">U</i>
<i class="u" style="left:0px;top:68px;transform:scaleX(0.779)">B</i><i class="u" style="left:8px;top:68px">J</i><i style="left:16px;top:68px;transform:scaleX(1.400)">-</i><i class="u" style="left:24px;top:68px;transform:scaleX(0.779)">R</i><i class="u" style="left:32px;top:68px;transform:scaleX(0.935)">S</i><i style="left:40px;top:68px">1</i><i style="left:48px;top:68px">(</i><i style="left:56px;top:68px">c</i><i style="left:64px;top:68px">o</i><i style="left:72px;top:68px">n</i><i style="left:80px;top:68px;transform:scaleX(1.250)">f</i><i style="left:88px;top:68px;transform:scaleX(1.200)">i</i><i style="left:96px;top:68px">g</i><i style="left:104px;top:68px;transform:scaleX(1.400)">-</i><i style="left:112px;top:68px">v</i><i style="left:120px;top:68px;transform:scaleX(1.200)">l</i><i style="left:128px;top:68px">a</i><i style="left:136px;top:68px">n</i><i style="left:144px;top:68px">2</i><i style="left:152px;top:68px">0</i><i style="left:160px;top:68px">)</i><i style="left:168px;top:68px">#</i><i style="left:176px;top:68px">v</i><i style="left:184px;top:68px;transform:scaleX(1.200)">l</i><i style="left:192px;top:68px">a</i><i style="left:200px;top:68px">n</i><i style="left:216px;top:68px">3</i><i style="left:224px;top:68px">0</i>
<i class="u" style="left:0px;top:85px;transform:scaleX(0.779)">B</i><i class="u" style="left:8px;top:85px">J</i><i style="left:16px;top:85px;transform:scaleX(1.400)">-</i><i class="u" style="left:24px;top:85px;transform:scaleX(0.779)">R</i><i class="u" style="left:32px;top:85px;transform:scaleX(0.935)">S</i><i style="left:40px;top:85px">1</i><i style="left:48px;top:85px">(</i><i style="left:56px;top:85px">c</i><i style="left:64px;top:85px">o</i><i style="left:72px;top:85px">n</i><i style="left:80px;top:85px;transform:scaleX(1.250)">f</i><i style="left:88px;top:85px;transform:scaleX(1.200)">i</i><i style="left:96px;top:85px">g</i><i style="left:104px;top:85px;transform:scaleX(1.400)">-</i><i style="left:112px;top:85px">v</i><i style="left:120px;top:85px;transform:scaleX(1.200)">l</i><i style="left:128px;top:85px">a</i><i style="left:136px;top:85px">n</i><i style="left:144px;top:85px">3</i><i style="left:152px;top:85px">0</i><i style="left:160px;top:85px">)</i><i style="left:168px;top:85px">#</i><i style="left:176px;top:85px">n</i><i style="left:184px;top:85px">a</i><i style="left:192px;top:85px;transform:scaleX(0.643)">m</i><i style="left:200px;top:85px">e</i><i class="u" style="left:216px;top:85px;transform:scaleX(0.779)">R</i><i class="u" style="left:224px;top:85px;transform:scaleX(0.719)">U</i><i class="u" style="left:232px;top:85px;transform:scaleX(0.719)">A</i><i class="u" style="left:240px;top:85px;transform:scaleX(0.719)">N</i><i class="u" style="left:248px;top:85px">J</i><i class="m" style="left:256px;top:85px">I</i><i class="u" style="left:264px;top:85px;transform:scaleX(0.719)">A</i><i class="u" style="left:272px;top:85px;transform:scaleX(0.719)">N</i><i class="u" style="left:280px;top:85px;transform:scaleX(0.779)">B</i><i class="u" style="left:288px;top:85px;transform:scaleX(0.719)">U</i>
<i class="u" style="left:0px;top:102px;transform:scaleX(0.779)">B</i><i class="u" style="left:8px;top:102px">J</i><i style="left:16px;top:102px;transform:scaleX(1.400)">-</i><i class="u" style="left:24px;top:102px;transform:scaleX(0.779)">R</i><i class="u" style="left:32px;top:102px;transform:scaleX(0.935)">S</i><i style="left:40px;top:102px">1</i><i style="left:48px;top:102px">(</i><i style="left:56px;top:102px">c</i><i style="left:64px;top:102px">o</i><i style="left:72px;top:102px">n</i><i style="left:80px;top:102px;transform:scaleX(1.250)">f</i><i style="left:88px;top:102px;transform:scaleX(1.200)">i</i><i style="left:96px;top:102px">g</i><i style="left:104px;top:102px;transform:scaleX(1.400)">-</i><i style="left:112px;top:102px">v</i><i style="left:120px;top:102px;transform:scaleX(1.200)">l</i><i style="left:128px;top:102px">a</i><i style="left:136px;top:102px">n</i><i style="left:144px;top:102px">3</i><i style="left:152px;top:102px">0</i><i style="left:160px;top:102px">)</i><i style="left:168px;top:102px">#</i><i style="left:176px;top:102px">v</i><i style="left:184px;top:102px;transform:scaleX(1.200)">l</i><i style="left:192px;top:102px">a</i><i style="left:200px;top:102px">n</i><i style="left:216px;top:102px">4</i><i style="left:224px;top:102px">0</i>
</div>
<!-- status -->
<div class="a" id="status"></div>
<div class="a" id="statusline"></div>
<div class="a" style="left:72px;top:735px;width:744px;height:1px;background:#fff"></div>
<div class="a" style="left:74px;top:732px;width:741px;height:1px;background:#e4e4e4"></div>
<div class="a st" style="left:76px;font-size:12px;top:739px">就绪</div>
<div class="a st" style="left:384px">Serial: COM22, 9600</div>
<div class="a sep" style="left:499px"></div>
<div class="a st" style="left:510px">8,&nbsp; 30</div>
<div class="a sep" style="left:547px"></div>
<div class="a st" style="left:554px">35<span style="font-size:12px">行</span>, 90<span style="font-size:12px">列</span></div>
<div class="a sep" style="left:616px"></div>
<div class="a st" style="left:621px;letter-spacing:-.5px">VT100</div>
<div class="a sep" style="left:668px"></div>
<div class="a sep" style="left:738px"></div>
<div class="a st" style="left:743px;color:#8a8a8a;font-size:12px;top:739px">大写</div>
<div class="a sep" style="left:768px"></div>
<div class="a st" style="left:773px;color:#8a8a8a;font-size:12px;top:739px">数字</div>
<div class="a sep" style="left:798px"></div>
<svg style="left:805px;top:743px" width="9" height="9" viewBox="0 0 9 9" shape-rendering="crispEdges">
<g fill="#a8a8a8"><rect x="6" y="0" width="1" height="1"/><rect x="4" y="3" width="1" height="1"/><rect x="6" y="3" width="1" height="1"/><rect x="1" y="6" width="1" height="1"/><rect x="4" y="6" width="1" height="1"/><rect x="6" y="6" width="1" height="1"/></g>
</svg>
</body></html>
